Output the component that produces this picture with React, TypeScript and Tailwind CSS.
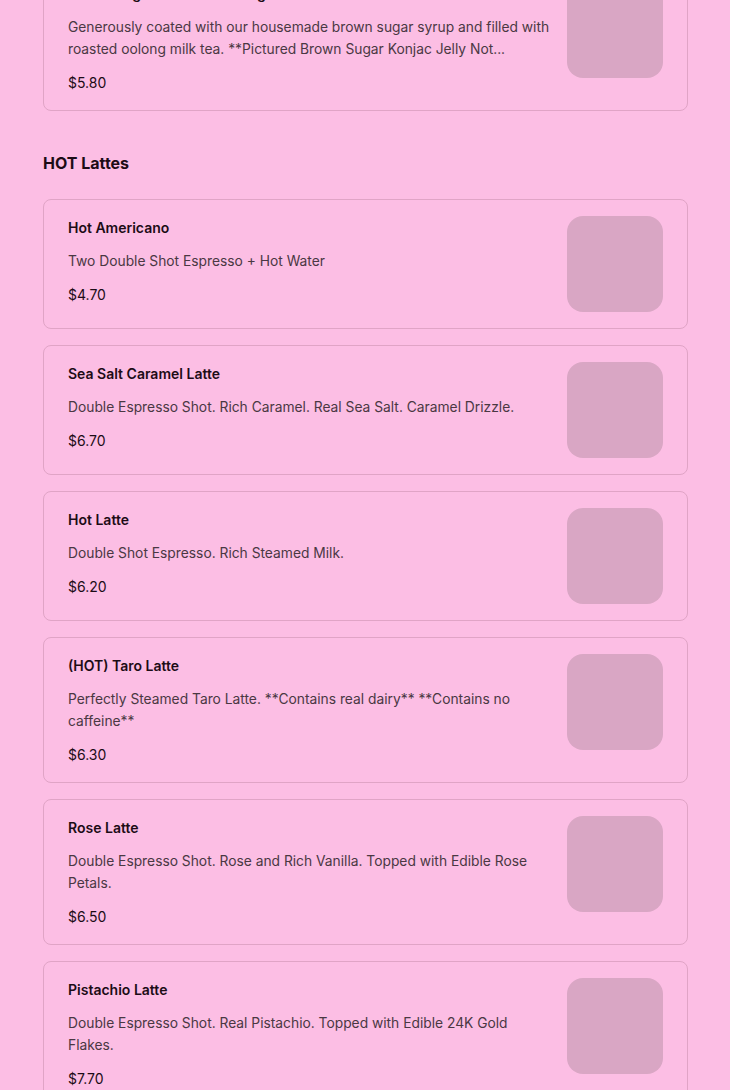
type Item = { name: string; desc: string; price: string };

const prevItems: Item[] = [
  {
    name: "Brown Sugar Roasted Oolong Milk Tea",
    desc: "Generously coated with our housemade brown sugar syrup and filled with roasted oolong milk tea. **Pictured Brown Sugar Konjac Jelly Not...",
    price: "$5.80",
  },
];

const hotLattes: Item[] = [
  { name: "Hot Americano", desc: "Two Double Shot Espresso + Hot Water", price: "$4.70" },
  {
    name: "Sea Salt Caramel Latte",
    desc: "Double Espresso Shot. Rich Caramel. Real Sea Salt. Caramel Drizzle.",
    price: "$6.70",
  },
  { name: "Hot Latte", desc: "Double Shot Espresso. Rich Steamed Milk.", price: "$6.20" },
  {
    name: "(HOT) Taro Latte",
    desc: "Perfectly Steamed Taro Latte. **Contains real dairy** **Contains no caffeine**",
    price: "$6.30",
  },
  {
    name: "Rose Latte",
    desc: "Double Espresso Shot. Rose and Rich Vanilla. Topped with Edible Rose Petals.",
    price: "$6.50",
  },
  {
    name: "Pistachio Latte",
    desc: "Double Espresso Shot. Real Pistachio. Topped with Edible 24K Gold Flakes.",
    price: "$7.70",
  },
];

function MenuCard({ item }: { item: Item }) {
  return (
    <article className="flex items-start gap-4 rounded-lg border border-[#e0a4c6] px-6 py-4">
      <div className="min-w-0 flex-1">
        <h3 className="pt-px text-sm font-semibold leading-[21px] text-[#1c0c16]">{item.name}</h3>
        <p className="mt-3 line-clamp-2 text-[13.8px] leading-[22px] text-[#4a3843]">{item.desc}</p>
        <p className="mt-3 text-sm leading-[22px] text-[#1c0c16]">{item.price}</p>
      </div>
      <div className="h-24 w-24 shrink-0 rounded-2xl bg-[#d9a6c4]" />
    </article>
  );
}

export default function App() {
  return (
    <main
      className="min-h-screen overflow-hidden bg-[#fcbee4] pl-[43px] pr-[42px]"
      style={{ fontFamily: "Inter, 'Liberation Sans', sans-serif" }}
    >
      <section className="-mt-[35px] space-y-4">
        {prevItems.map((item) => (
          <MenuCard key={item.name} item={item} />
        ))}
      </section>

      <section aria-labelledby="hot-lattes" className="pb-10">
        <h2 id="hot-lattes" className="mt-[38px] mb-[22px] text-base font-bold leading-7 text-[#1c0c16]">
          HOT Lattes
        </h2>
        <div className="space-y-4">
          {hotLattes.map((item) => (
            <MenuCard key={item.name} item={item} />
          ))}
        </div>
      </section>
    </main>
  );
}
